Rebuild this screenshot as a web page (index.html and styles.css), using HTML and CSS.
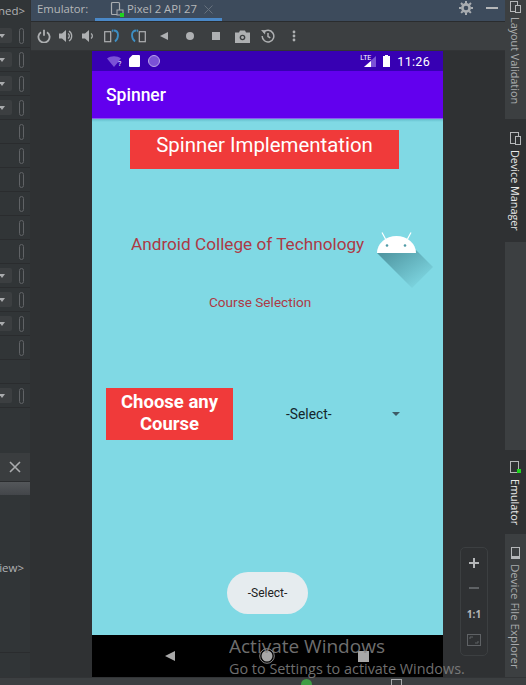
FILE: index.html
```html
<!DOCTYPE html>
<html lang="en">

<head>
    <meta charset="UTF-8">
    <title>Spinner emulator</title>
    <link rel="stylesheet" href="styles.css">
</head>

<body>
    <div class="ide">
        <aside class="left">
            <div class="row first"><span class="tag">ned&gt;</span></div>
            <div class="row"><span class="drop"><i></i></span><span class="pill"></span></div>
            <div class="row"><span class="drop"><i></i></span><span class="pill"></span></div>
            <div class="row"><span class="drop"><i></i></span><span class="pill"></span></div>
            <div class="row"><span class="drop"><i></i></span><span class="pill"></span></div>
            <div class="row"><span class="pill"></span></div>
            <div class="row"><span class="pill"></span></div>
            <div class="row"><span class="pill"></span></div>
            <div class="row"><span class="pill"></span></div>
            <div class="row"><span class="pill"></span></div>
            <div class="row"><span class="pill"></span></div>
            <div class="row"><span class="drop"><i></i></span><span class="pill"></span></div>
            <div class="row"><span class="drop"><i></i></span><span class="pill"></span></div>
            <div class="row"><span class="drop"><i></i></span><span class="pill"></span></div>
            <div class="row"><span class="pill"></span></div>
            <div class="row"></div>
            <div class="row"><span class="drop"><i></i></span><span class="pill"></span></div>
            <div class="close-bar">
                <svg width="12" height="12" viewBox="0 0 12 12"><path d="M1 1l10 10M11 1L1 11" stroke="#a9abad" stroke-width="1.6" /></svg>
            </div>
            <div class="band"></div>
            <div class="tree"><span class="tag">iew&gt;</span></div>
            <div class="tree-foot"></div>
        </aside>

        <main class="center">
            <div class="tabs">
                <span class="tabs-label">Emulator:</span>
                <div class="tab">
                    <svg width="17" height="17" viewBox="0 0 17 17">
                        <rect x="1.5" y="1.5" width="8" height="12" rx="1" fill="none" stroke="#a9adb1" stroke-width="1.2" />
                        <rect x="7" y="9" width="6" height="5" fill="#3d4b5c" stroke="#a9adb1" />
                        <rect x="10" y="12" width="4" height="4" fill="#1fd41f" />
                    </svg>
                    <span>Pixel 2 API 27</span>
                    <svg class="tab-x" width="9" height="9" viewBox="0 0 9 9"><path d="M.5.5l8 8M8.5.5l-8 8" stroke="#66717d" /></svg>
                </div>
                <svg class="gear" width="14" height="14" viewBox="0 0 14 14">
                    <circle cx="7" cy="7" r="3.6" fill="none" stroke="#a9adb1" stroke-width="2.6" />
                    <path d="M7 0v14M0 7h14M2 2l10 10M12 2L2 12" stroke="#a9adb1" stroke-width="2" stroke-dasharray="2.4 9.2 2.4" />
                </svg>
                <span class="minimize"></span>
            </div>

            <div class="toolbar">
                <span class="tool short"><svg width="14" height="14" viewBox="0 0 14 14"><path d="M4 3.2a5.6 5.6 0 1 0 6 0M7 .8v6" fill="none" stroke="#aeb0b2" stroke-width="1.8" /></svg></span>
                <span class="tool short"><svg width="14" height="14" viewBox="0 0 14 14"><path d="M0 4.5h3L7 1v12L3 9.500H0z" fill="#aeb0b2" /><path d="M9 4.500a3 3 0 0 1 0 5M10 2a6 6 0 0 1 0 10" fill="none" stroke="#aeb0b2" stroke-width="1.300" /></svg></span>
                <span class="tool short"><svg width="14" height="14" viewBox="0 0 14 14"><path d="M1 4.500h3L8 1v12L4 9.500H1z" fill="#aeb0b2" /><path d="M10 4.500a3 3 0 0 1 0 5" fill="none" stroke="#aeb0b2" stroke-width="1.300" /></svg></span>
                <span class="tool"><svg width="16" height="14" viewBox="0 0 16 14"><rect x=".7" y="2.700" width="6" height="10" fill="none" stroke="#aeb0b2" stroke-width="1.200" /><path d="M9.500 1.500c3 0 4.500 1.500 4.500 4.500s-1 5-3 6.500" fill="none" stroke="#3d8fc4" stroke-width="1.800" /><path d="M9 0v3.500L7.500 1.700z" fill="#3d8fc4" /></svg></span>
                <span class="tool"><svg width="16" height="14" viewBox="0 0 16 14"><rect x="9.300" y="2.700" width="6" height="10" fill="none" stroke="#aeb0b2" stroke-width="1.200" /><path d="M6.500 1.500C3.500 1.500 2 3 2 6s1 5 3 6.500" fill="none" stroke="#3d8fc4" stroke-width="1.800" /><path d="M7 0v3.500l1.500-1.800z" fill="#3d8fc4" /></svg></span>
                <span class="tool"><svg width="10" height="10" viewBox="0 0 10 10"><path d="M9 1v8L1 5z" fill="#aeb0b2" /></svg></span>
                <span class="tool"><svg width="10" height="10" viewBox="0 0 10 10"><circle cx="5" cy="5" r="4" fill="#aeb0b2" /></svg></span>
                <span class="tool"><svg width="10" height="10" viewBox="0 0 10 10"><rect x="1" y="1" width="8" height="8" fill="#aeb0b2" /></svg></span>
                <span class="tool"><svg width="15" height="13" viewBox="0 0 15 13"><path d="M0 2.500h4L5 .5h5l1 2h4V13H0z" fill="#aeb0b2" /><circle cx="7.500" cy="7.500" r="2.800" fill="#3c3f41" /><circle cx="7.500" cy="7.500" r="1.400" fill="#aeb0b2" /></svg></span>
                <span class="tool"><svg width="14" height="14" viewBox="0 0 14 14"><path d="M2.500 3.500a5.800 5.800 0 1 1-1.300 3.500M7 4v3.500l2.300 1.300" fill="none" stroke="#aeb0b2" stroke-width="1.500" /><path d="M0 1l4.500.3L4 5.500z" fill="#aeb0b2" /></svg></span>
                <span class="tool"><svg width="4" height="12" viewBox="0 0 4 12"><circle cx="2" cy="2" r="1.400" fill="#aeb0b2" /><circle cx="2" cy="6" r="1.400" fill="#aeb0b2" /><circle cx="2" cy="10" r="1.400" fill="#aeb0b2" /></svg></span>
            </div>

            <div class="stage">
                <div class="phone">
                    <div class="status">
                        <svg class="st-wifi" width="15" height="11" viewBox="0 0 15 11"><path d="M0 2.500C4-.5 10-.5 14 2.500L7 11z" fill="#7b52d6" /></svg>
                        <span class="st-q">?</span>
                        <svg class="st-sd" width="11" height="12" viewBox="0 0 11 12"><path d="M3.500 0H10a1 1 0 0 1 1 1v10a1 1 0 0 1-1 1H1a1 1 0 0 1-1-1V3.500z" fill="#fff" /></svg>
                        <span class="st-dot"></span>
                        <span class="st-gap"></span>
                        <span class="st-lte">LTE</span>
                        <svg class="st-signal" width="12" height="11" viewBox="0 0 12 11"><path d="M12 0v11H0z" fill="#7b52d6" /><path d="M7 5v6H0z" fill="#fff" /></svg>
                        <svg class="st-batt" width="7" height="12" viewBox="0 0 7 12"><path d="M2 0h3v1h2v11H0V1h2z" fill="#fff" /></svg>
                        <span class="st-time">11:26</span>
                    </div>
                    <div class="appbar">Spinner</div>
                    <div class="screen">
                        <h1 class="banner">Spinner Implementation</h1>
                        <div class="college">
                            <span class="college-name">Android College of Technology</span>
                            <svg class="droid" width="58" height="60" viewBox="0 0 58 60">
                                <defs>
                                    <linearGradient id="shade" x1="0" y1="0" x2="1" y2="1">
                                        <stop offset=".1" stop-color="#37747f" stop-opacity=".65" />
                                        <stop offset=".9" stop-color="#37747f" stop-opacity="0" />
                                    </linearGradient>
                                </defs>
                                <path d="M1 24L40 21l17 17-21 21z" fill="url(#shade)" />
                                <path d="M1 24a19.500 17 0 0 1 39 0z" fill="#fff" />
                                <path d="M9.500 10L6 3.500M31.500 10L35 3.500" stroke="#fff" stroke-width="1.200" />
                                <circle cx="11" cy="16.500" r="1.300" fill="#4f9aa6" />
                                <circle cx="29" cy="16.500" r="1.300" fill="#4f9aa6" />
                            </svg>
                        </div>
                        <p class="course">Course Selection</p>
                        <div class="choose">
                            <h2 class="choose-label">Choose any Course</h2>
                            <div class="spinner">
                                <span>-Select-</span>
                                <i class="spinner-arrow"></i>
                            </div>
                        </div>
                        <button class="select-btn">-Select-</button>
                    </div>
                    <div class="navbar">
                        <svg width="12" height="12" viewBox="0 0 12 12"><path d="M11 1v10L1 6z" fill="#a8a8a8" /></svg>
                        <svg width="16" height="16" viewBox="0 0 16 16"><circle cx="8" cy="8" r="7.300" fill="none" stroke="#a8a8a8" stroke-width=".8" /><circle cx="8" cy="8" r="5.500" fill="#a8a8a8" /></svg>
                        <svg width="11" height="11" viewBox="0 0 11 11"><rect width="11" height="11" fill="#a8a8a8" /></svg>
                    </div>
                </div>
                <div class="zoom-box">
                    <svg width="12" height="12" viewBox="0 0 12 12"><path d="M6 1v10M1 6h10" stroke="#b5b7b9" stroke-width="2" /></svg>
                    <svg width="12" height="12" viewBox="0 0 12 12"><path d="M1 6h10" stroke="#5f6265" stroke-width="2" /></svg>
                    <span class="zoom-one">1:1</span>
                    <svg width="14" height="12" viewBox="0 0 14 12"><rect x=".5" y=".5" width="13" height="11" fill="none" stroke="#5f6265" /><path d="M3 5V3h3M11 7v2H8" fill="none" stroke="#5f6265" /></svg>
                </div>
            </div>
        </main>

        <aside class="right">
            <div class="side side-layout">
                <svg width="11" height="12" viewBox="0 0 11 12"><rect x=".5" y=".5" width="7" height="10" fill="none" stroke="#b5b7b9" /><rect x="5.500" y="4.500" width="5" height="7" fill="#3c3f41" stroke="#b5b7b9" /></svg>
                <span>Layout Validation</span>
            </div>
            <div class="side side-device active">
                <svg width="11" height="13" viewBox="0 0 11 13"><rect x=".5" y=".5" width="8" height="11" fill="none" stroke="#b5b7b9" /><rect x="5.500" y="4.500" width="5" height="8" fill="#2f3133" stroke="#b5b7b9" /></svg>
                <span>Device Manager</span>
            </div>
            <div class="side side-spacer"></div>
            <div class="side side-emulator active">
                <svg width="11" height="13" viewBox="0 0 11 13"><rect x=".5" y=".5" width="8" height="11" fill="none" stroke="#b5b7b9" /><rect x="7" y="8" width="4" height="4" fill="#1fd41f" /></svg>
                <span>Emulator</span>
            </div>
            <div class="side side-files">
                <svg width="9" height="12" viewBox="0 0 9 12"><rect x=".5" y=".5" width="8" height="11" fill="none" stroke="#b5b7b9" /><rect x="1" y="9" width="7" height="2" fill="#b5b7b9" /></svg>
                <span>Device File Explorer</span>
            </div>
        </aside>
    </div>
    <div class="statusbar">
        <span class="green-dot"></span>
        <span class="doc-mark"></span>
    </div>

    <div class="watermark">
        <div class="wm-title">Activate Windows</div>
        <div class="wm-sub">Go to Settings to activate Windows.</div>
    </div>
</body>

</html>
```

FILE: styles.css
```css
html,
body {
    margin: 0;
    padding: 0;
    height: 685px;
    overflow: hidden;
}

body {
    position: relative;
    background-color: #2f3133;
    font-family: 'Open Sans', sans-serif;
    color: #b5b7b9;
}

.ide {
    display: flex;
    height: 677px;
}

/* left panel */
.left {
    width: 30px;
    flex-shrink: 0;
    margin-right: 1px;
    background-color: #313537;
    display: flex;
    flex-direction: column;
    overflow: hidden;
}

.row {
    height: 23px;
    flex-shrink: 0;
    border-bottom: 1px solid #2a2c2e;
    display: flex;
    align-items: center;
    justify-content: flex-end;
    padding-right: 6px;
    position: relative;
}

.row.first {
    height: 24px;
    border-bottom: 0;
    padding-right: 5px;
    padding-bottom: 3px;
    box-sizing: border-box;
}

.tag {
    font-size: 11.5px;
    color: #b0b2b4;
}

.pill {
    width: 3px;
    height: 14px;
    border: 1px solid #606366;
    border-radius: 3px;
}

.drop {
    width: 12px;
    height: 15px;
    margin-right: 7px;
    background-color: #3c3f41;
    border-radius: 0 2px 2px 0;
    display: flex;
    align-items: center;
}

.drop i {
    width: 0;
    height: 0;
    border-style: solid;
    border-width: 4px 3.500px 0 3.500px;
    border-color: #a9abad transparent transparent transparent;
    margin-left: -1px;
}

.close-bar {
    margin-top: 45px;
    height: 28px;
    background-color: #3a3d3f;
    border-bottom: 1px solid #2a2c2e;
    display: flex;
    align-items: center;
    justify-content: flex-end;
    padding-right: 9px;
    flex-shrink: 0;
}

.band {
    height: 13px;
    flex-shrink: 0;
    background: linear-gradient(#54575a, #43464a);
}

.tree {
    height: 158px;
    flex-shrink: 0;
    border-bottom: 1px solid #2a2c2e;
    display: flex;
    justify-content: flex-end;
    padding-top: 65px;
    padding-right: 6px;
    box-sizing: border-box;
}

.tree-foot {
    flex-grow: 1;
}

/* center */
.center {
    flex-grow: 1;
    display: flex;
    flex-direction: column;
    min-width: 0;
}

.tabs {
    height: 21px;
    background-color: #3d4b5c;
    border-bottom: 1px solid #2a2c2e;
    display: flex;
    align-items: flex-start;
    font-size: 11.300px;
    color: #b5b7b9;
}

.tabs-label {
    margin-left: 6px;
    padding-top: 1px;
    width: 58px;
}

.tab {
    width: 127px;
    height: 21px;
    box-sizing: border-box;
    border-bottom: 3px solid #4a88c7;
    display: flex;
    align-items: flex-start;
    padding-left: 15px;
    padding-top: 1px;
}

.tab svg {
    flex-shrink: 0;
}

.tab-x {
    margin-top: 4px;
    margin-left: 7px;
}

.gear {
    margin-left: auto;
    margin-top: 1px;
}

.minimize {
    width: 12px;
    height: 2px;
    background-color: #b5b7b9;
    margin: 7px 7px 0 13px;
}

.toolbar {
    height: 28px;
    background-color: #3c3f41;
    border-bottom: 1px solid #323436;
    display: flex;
    align-items: center;
    padding-left: 2px;
}

.tool {
    width: 26px;
    display: flex;
    justify-content: center;
    flex-shrink: 0;
}

.tool.short {
    width: 22px;
}

.stage {
    flex-grow: 1;
    position: relative;
    padding-left: 61px;
}

/* phone */
.phone {
    width: 351px;
    height: 626px;
    display: flex;
    flex-direction: column;
}

.status {
    height: 20px;
    background-color: #3700b3;
    display: flex;
    align-items: center;
    padding-left: 15px;
    padding-right: 13px;
    color: #fff;
}

.st-q {
    font-size: 7px;
    font-family: Roboto, sans-serif;
    margin-left: -4px;
    margin-top: 5px;
    width: 5px;
}

.st-sd {
    margin-left: 6px;
}

.st-dot {
    width: 10px;
    height: 10px;
    margin-left: 8px;
    border-radius: 50%;
    background-color: #7b52d6;
    border: 1px solid #b9a3ea;
}

.st-gap {
    flex-grow: 1;
}

.st-lte {
    font-size: 7px;
    font-family: Roboto, sans-serif;
    margin-right: -7px;
    margin-top: -6px;
}

.st-batt {
    margin-left: 7px;
}

.st-time {
    margin-left: 7px;
    font-family: Roboto, sans-serif;
    font-size: 12.500px;
    letter-spacing: .3px;
}

.appbar {
    height: 48px;
    box-sizing: border-box;
    background-color: #6200ee;
    color: #fff;
    font-family: Roboto, sans-serif;
    font-size: 17.500px;
    font-weight: 500;
    display: flex;
    align-items: center;
    padding-left: 14px;
    padding-top: 1px;
    border-bottom: 1px solid #8c5cf0;
}

.screen {
    flex-grow: 1;
    background: linear-gradient(#62bccb, #80d9e4 3px);
    display: flex;
    flex-direction: column;
    font-family: Roboto, sans-serif;
}

.banner {
    margin: 11px 0 0 38px;
    width: 269px;
    height: 39px;
    box-sizing: border-box;
    background-color: #f03a3a;
    color: #fff;
    font-size: 20.400px;
    font-weight: 400;
    line-height: 30px;
    text-align: center;
}

.college {
    margin: 50px 0 0 39px;
    height: 60px;
    display: flex;
    align-items: flex-start;
}

.college-name {
    color: #ad3a45;
    font-size: 17.200px;
    line-height: 50px;
    white-space: nowrap;
}

.droid {
    margin-left: 12px;
    margin-top: 10px;
    flex-shrink: 0;
}

.course {
    margin: 14px 0 0 117px;
    color: #ad3a45;
    font-size: 13.600px;
    line-height: 18px;
}

.choose {
    margin: 77px 0 0 14px;
    display: flex;
    align-items: center;
}

.choose-label {
    margin: 0;
    width: 127px;
    height: 52px;
    background-color: #f03a3a;
    color: #fff;
    font-size: 18.500px;
    font-weight: 700;
    line-height: 22px;
    padding-top: 3px;
    box-sizing: border-box;
    text-align: center;
}

.spinner {
    margin-left: 53px;
    width: 114px;
    display: flex;
    align-items: center;
    justify-content: space-between;
    font-size: 13.800px;
    color: #14252b;
}

.spinner-arrow {
    width: 0;
    height: 0;
    border-style: solid;
    border-width: 4.500px 4.500px 0 4.500px;
    border-color: #3f5c66 transparent transparent transparent;
}

.select-btn {
    margin: auto 0 21px 135px;
    width: 81px;
    height: 42px;
    border: 0;
    border-radius: 21px;
    background-color: #e6ecef;
    color: #222;
    font-family: Roboto, sans-serif;
    font-size: 12px;
    padding: 0;
}

.navbar {
    height: 42px;
    background-color: #000;
    display: flex;
    align-items: center;
    padding-left: 72px;
    gap: 83px;
}

.zoom-box {
    position: absolute;
    left: 429px;
    top: 496px;
    width: 26px;
    height: 103px;
    border: 1px solid #3c3f41;
    border-radius: 5px;
    display: flex;
    flex-direction: column;
    align-items: center;
    justify-content: space-around;
    padding: 2px 0;
}

.zoom-one {
    font-family: 'Open Sans', sans-serif;
    font-size: 10px;
    font-weight: 700;
    color: #b5b7b9;
}

/* right strip */
.right {
    width: 21px;
    flex-shrink: 0;
    background-color: #3c3f41;
    display: flex;
    flex-direction: column;
    font-size: 11.500px;
}

.side {
    display: flex;
    flex-direction: column;
    align-items: center;
    gap: 5px;
    color: #a9abad;
    overflow: hidden;
}

.side span {
    writing-mode: vertical-rl;
    white-space: nowrap;
}

.side.active {
    background-color: #2f3133;
    color: #e8e8e8;
}

.side-layout {
    height: 119px;
    gap: 4px;
    padding-top: 1px;
    box-sizing: border-box;
    font-size: 10.800px;
}

.side-device {
    height: 123px;
    padding-top: 13px;
    box-sizing: border-box;
    font-size: 10.800px;
}

.side-spacer {
    height: 208px;
}

.side-emulator {
    height: 84px;
    padding-top: 11px;
    box-sizing: border-box;
    font-size: 10.800px;
}

.side-files {
    flex-grow: 1;
    padding-top: 13px;
    box-sizing: border-box;
}

.statusbar {
    height: 8px;
    background-color: #3c3f41;
    position: relative;
    overflow: hidden;
    border-top: 1px solid #323436;
    box-sizing: border-box;
}

.green-dot {
    position: absolute;
    left: 301px;
    top: 1px;
    width: 11px;
    height: 11px;
    border-radius: 50%;
    background-color: #3f9d45;
}

.doc-mark {
    position: absolute;
    left: 391px;
    top: 1px;
    width: 9px;
    height: 9px;
    border: 1px solid #a9abad;
}

/* over everything */
.watermark {
    position: absolute;
    left: 229px;
    top: 635px;
    color: #8a8a8a;
    opacity: .8;
    white-space: nowrap;
    font-family: 'Open Sans', sans-serif;
}

.wm-title {
    font-size: 19px;
    line-height: 23px;
}

.wm-sub {
    font-size: 14.400px;
    line-height: 22px;
}
```
